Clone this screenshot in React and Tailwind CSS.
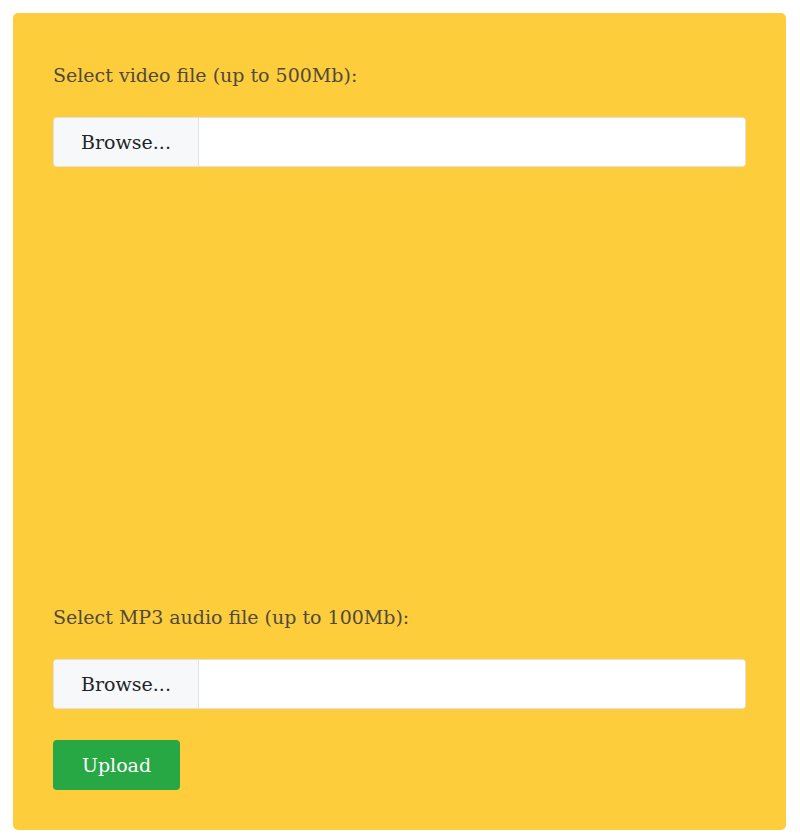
export default function App() {
  const font = { fontFamily: '"DejaVu Serif", "Liberation Serif", serif' };
  const FileInput = () => (
    <div className="flex h-[50px] w-full overflow-hidden rounded-[4px] border border-[#e2e2dc] bg-white">
      <div className="flex w-[145px] shrink-0 items-center justify-center border-r border-[#e0e2e4] bg-[#f7f8fa] text-[19px] text-[#212529]">
        Browse...
      </div>
      <div className="flex-1 bg-white" />
    </div>
  );
  return (
    <div className="min-h-[840px] w-[800px] bg-white p-[13px]" style={font}>
      <div className="flex h-[817px] w-[773px] flex-col rounded-[5px] bg-[#fecd3c] px-[40px] pt-[47px]">
        <div className="h-[30px] text-[19px] leading-[30px] text-[#4e4a3c]">
          Select video file (up to 500Mb):
        </div>
        <div className="mt-[27px]">
          <FileInput />
        </div>
        <div className="h-[435px]" />
        <div className="h-[30px] text-[19px] leading-[30px] text-[#4e4a3c]">
          Select MP3 audio file (up to 100Mb):
        </div>
        <div className="mt-[27px]">
          <FileInput />
        </div>
        <div className="mt-[31px]">
          <button className="h-[50px] w-[127px] rounded-[4px] bg-[#28a745] text-[19px] text-white">
            Upload
          </button>
        </div>
      </div>
    </div>
  );
}
